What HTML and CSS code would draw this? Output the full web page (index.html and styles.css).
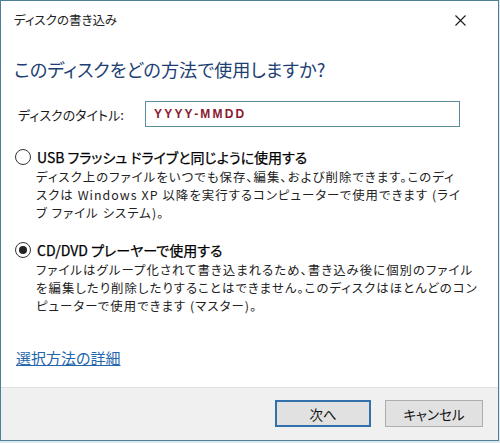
FILE: index.html
```html
<!DOCTYPE html>
<html lang="ja">
<head>
  <meta charset="UTF-8">
  <meta name="viewport" content="width=device-width, initial-scale=1.0">
  <title>ディスクの書き込み</title>
  <link rel="stylesheet" href="styles.css">
</head>
<body>
  <div class="window">
    <header class="titlebar">
      <span class="caption">ディスクの書き込み</span>
      <button class="close" aria-label="閉じる">
        <svg width="11" height="11" viewBox="0 0 11 11">
          <path d="M0.5 0.5 L10.5 10.5 M10.5 0.5 L0.5 10.5" stroke="#1a1a1a" stroke-width="1.1" fill="none"/>
        </svg>
      </button>
    </header>

    <main class="content">
      <h1 class="instruction">このディスクをどの方法で使用しますか?</h1>

      <div class="titleRow">
        <label class="fieldLabel" for="discTitle">ディスクのタイトル:</label>
        <div class="field" id="discTitle">YYYY-MMDD</div>
      </div>

      <div class="option">
        <div class="optionHead">
          <span class="radio"></span>
          <span class="optionLabel">USB フラッシュ ドライブと同じように使用する</span>
        </div>
        <p class="desc">ディスク上のファイルをいつでも保存、編集、および削除できます。このディ<br>スクは Windows XP 以降を実行するコンピューターで使用できます (ライ<br>ブ ファイル システム)。</p>
      </div>

      <div class="option second">
        <div class="optionHead">
          <span class="radio checked"></span>
          <span class="optionLabel">CD/DVD プレーヤーで使用する</span>
        </div>
        <p class="desc">ファイルはグループ化されて書き込まれるため、書き込み後に個別のファイル<br>を編集したり削除したりすることはできません。このディスクはほとんどのコン<br>ピューターで使用できます (マスター)。</p>
      </div>

      <a class="help" href="#">選択方法の詳細</a>
    </main>

    <footer class="buttons">
      <button class="btn default">次へ</button>
      <button class="btn">キャンセル</button>
    </footer>
  </div>
</body>
</html>
```

FILE: styles.css
```css
* {
  margin: 0;
  padding: 0;
  box-sizing: border-box;
}
html, body {
  width: 500px;
  height: 443px;
  background-color: #dce8ee;
  overflow: hidden;
}
body {
  font-family: "Noto Sans CJK JP", "Noto Sans", sans-serif;
  font-feature-settings: "palt";
  color: #1a1a1a;
}
.window {
  width: 499px;
  height: 441px;
  border: 1px solid #4d7f97;
  background-color: #fff;
  display: flex;
  flex-direction: column;
}

/* タイトルバー */
.titlebar {
  height: 37px;
  display: flex;
  align-items: center;
  justify-content: space-between;
  padding: 0 32px 1px 13px;
}
.caption {
  font-size: 12.5px;
  color: #222;
}
.close {
  border: none;
  background: transparent;
  width: 11px;
  height: 11px;
  display: block;
  margin-top: 2px;
}
.close svg {
  display: block;
}

/* 本文 */
.content {
  flex: 1;
  padding: 19px 14px 0 13px;
}
.instruction {
  font-size: 18.2px;
  font-weight: normal;
  line-height: 24px;
  color: #1d3f73;
}
.titleRow {
  display: flex;
  align-items: center;
  margin-top: 20px;
  padding-left: 4px;
}
.fieldLabel {
  font-size: 13px;
  width: 127px;
}
.field {
  width: 315px;
  height: 26px;
  border: 1px solid #5b8b9d;
  padding-left: 8px;
  display: flex;
  align-items: center;
  font-family: "Liberation Sans", Arial, sans-serif;
  font-weight: bold;
  font-size: 12px;
  letter-spacing: 2.2px;
  color: #8a1930;
}

.option {
  margin-top: 20px;
}
.option.second {
  margin-top: 18px;
}
.optionHead {
  display: flex;
  align-items: center;
  height: 20px;
}
.radio {
  width: 16px;
  height: 16px;
  border: 1px solid #333;
  border-radius: 50%;
  margin: 0 6px 0 1px;
  display: flex;
  align-items: center;
  justify-content: center;
  background: #fff;
}
.radio.checked::before {
  content: "";
  width: 8px;
  height: 8px;
  border-radius: 50%;
  background: #222;
}
.optionLabel {
  font-size: 14px;
  font-weight: normal;
  color: #000;
  -webkit-text-stroke: 0.25px #000;
}
.desc {
  margin-top: 1px;
  padding-left: 22px;
  font-size: 12.4px;
  letter-spacing: 1.05px;
  line-height: 18px;
  white-space: nowrap;
  color: #222;
}

.help {
  display: inline-block;
  margin-top: 33px;
  margin-left: 2px;
  font-size: 15px;
  line-height: 20px;
  color: #2466ad;
  text-decoration: underline;
}

/* ボタン */
.buttons {
  height: 53px;
  background-color: #f0f0f0;
  border-top: 1px solid #e0e0e0;
  display: flex;
  justify-content: flex-end;
  align-items: flex-start;
  gap: 14px;
  padding: 12px 15px 0 0;
}
.btn {
  width: 98px;
  height: 27px;
  border: 1px solid #adadad;
  background-color: #e1e1e1;
  font-family: "Noto Sans CJK JP", sans-serif;
  font-feature-settings: "palt";
  font-size: 13.5px;
  color: #111;
}
.btn.default {
  border: 2px solid #3271ab;
  width: 96px;
}
```
